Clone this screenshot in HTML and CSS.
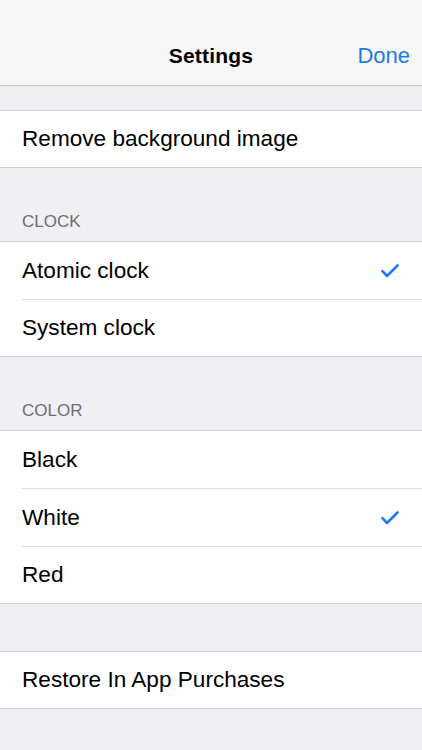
FILE: index.html
```html
<!DOCTYPE html>
<html lang="en">
<head>
<meta charset="utf-8">
<title>Settings</title>
<link rel="stylesheet" href="styles.css">
</head>
<body>
<header class="nav">
  <div class="nav-bar">
    <span class="nav-title">Settings</span>
    <span class="nav-done">Done</span>
  </div>
</header>
<main class="content">
  <div class="gap gap-top"></div>
  <ul class="group">
    <li class="row"><span class="label">Remove background image</span></li>
  </ul>
  <div class="gap section-header">CLOCK</div>
  <ul class="group">
    <li class="row"><span class="label">Atomic clock</span>
      <svg class="check" width="18" height="14" viewBox="0 0 18 14"><path d="M1.5 7.2 L6 12 L16.5 1.5" fill="none" stroke="#1b7cf2" stroke-width="2.6" stroke-linecap="round" stroke-linejoin="round"/></svg>
    </li>
    <li class="row"><span class="label">System clock</span></li>
  </ul>
  <div class="gap section-header">COLOR</div>
  <ul class="group">
    <li class="row"><span class="label">Black</span></li>
    <li class="row"><span class="label">White</span>
      <svg class="check" width="18" height="14" viewBox="0 0 18 14"><path d="M1.5 7.2 L6 12 L16.5 1.5" fill="none" stroke="#1b7cf2" stroke-width="2.6" stroke-linecap="round" stroke-linejoin="round"/></svg>
    </li>
    <li class="row"><span class="label">Red</span></li>
  </ul>
  <div class="gap gap-plain"></div>
  <ul class="group">
    <li class="row"><span class="label">Restore In App Purchases</span></li>
  </ul>
</main>
</body>
</html>
```
FILE: styles.css
```css
html, body {
  margin: 0;
  padding: 0;
}
body {
  background: #efeff4;
  font-family: "Liberation Sans", Arial, sans-serif;
  color: #000;
  width: 422px;
  height: 750px;
  overflow: hidden;
}
.nav {
  background: #f7f7f8;
  padding-top: 26px;
  border-bottom: 1px solid #c4c4c8;
}
.nav-bar {
  height: 59px;
  display: flex;
  align-items: center;
  justify-content: center;
  position: relative;
}
.nav-title {
  font-weight: bold;
  font-size: 21px;
  letter-spacing: 0.2px;
}
.nav-done {
  position: absolute;
  right: 12px;
  top: 0;
  height: 59px;
  display: flex;
  align-items: center;
  color: #1a7de6;
  font-size: 22px;
}
.content {
  display: block;
}
.gap-top {
  height: 24px;
}
.section-header {
  height: 73px;
  box-sizing: border-box;
  display: flex;
  align-items: flex-end;
  padding: 0 0 9px 22px;
  font-size: 17px;
  line-height: 20px;
  color: #6d6d72;
}
.gap-plain {
  height: 47px;
}
.group {
  list-style: none;
  margin: 0;
  padding: 0;
  background: #fff;
  border-top: 1px solid #d2d2d6;
  border-bottom: 1px solid #d2d2d6;
}
.row {
  height: 57px;
  display: flex;
  align-items: center;
  justify-content: space-between;
  padding: 0 23px 0 22px;
  position: relative;
  font-size: 22.6px;
}
.row:last-child {
  height: 56px;
}
.row + .row {
  margin-top: 1px;
}
.row + .row::after {
  content: "";
  position: absolute;
  left: 22px;
  right: 0;
  top: -1px;
  height: 1px;
  background: #dcdce0;
}
.check {
  display: block;
}
```
